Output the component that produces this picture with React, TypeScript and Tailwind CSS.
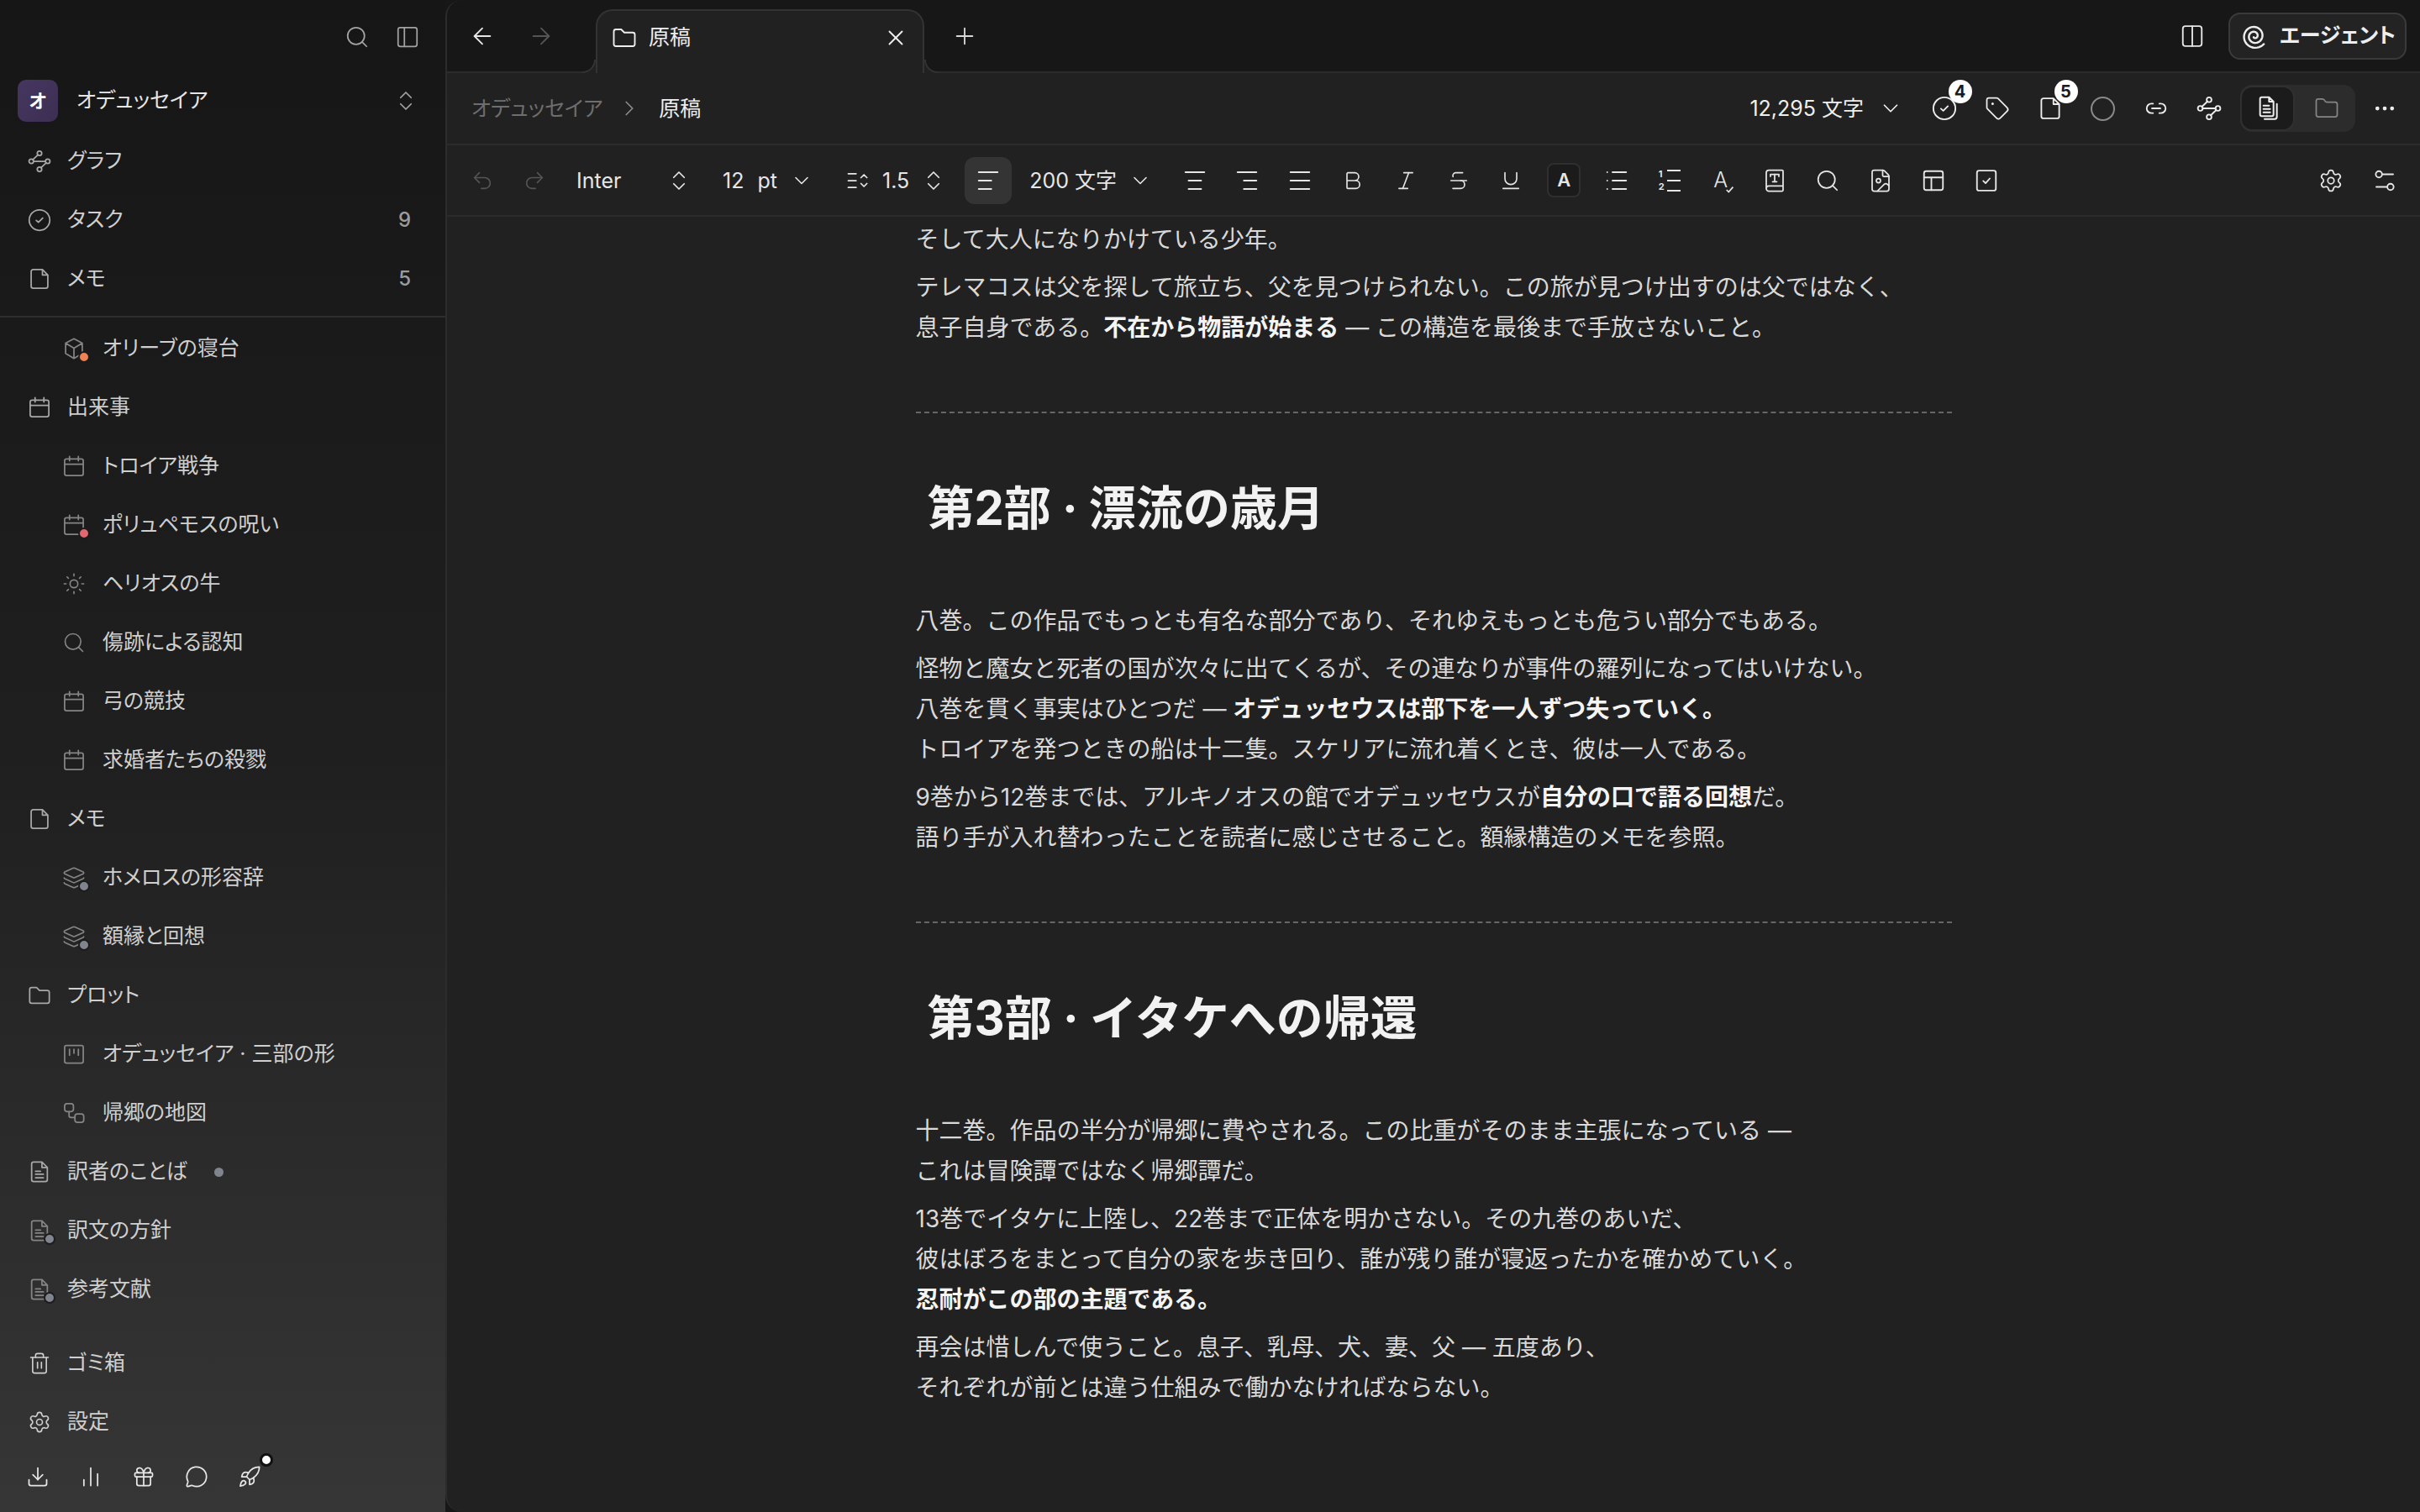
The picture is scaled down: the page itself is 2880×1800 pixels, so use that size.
import type { ReactNode } from 'react'
import {
  ArrowLeft, ArrowRight, Bold, BookType, ChevronDown, ChevronRight, ChevronsUpDown, Download, Ellipsis,
  FileImage, Folder, Gift, Italic, Layers, MessageCircle, PanelLeft, Plus, Redo2, Rocket, Search, Settings,
  Strikethrough, Sun, Tag, Trash2, Underline, Undo2, X,
} from 'lucide-react'

function Svg({ size = 28, children, className }: { size?: number; children: ReactNode; className?: string }) {
  return (
    <svg width={size} height={size} viewBox="0 0 24 24" fill="none" stroke="currentColor" strokeWidth="1.5" strokeLinecap="round" strokeLinejoin="round" className={className}>
      {children}
    </svg>
  )
}

const GraphIcon = ({ size = 28 }: { size?: number }) => (
  <Svg size={size}>
    <circle cx="12" cy="3.800" r="2.300" /><circle cx="3.600" cy="12" r="2.300" /><circle cx="20.400" cy="12" r="2.300" /><circle cx="12" cy="20.200" r="2.300" />
    <path d="M5.900 12h12.200M10.400 5.400 5.200 10.400M18.800 13.600l-5.200 5" />
  </Svg>
)
const CheckCircle = ({ size = 28 }: { size?: number }) => (
  <Svg size={size}><circle cx="12" cy="12" r="10.500" /><path d="m8.700 12.300 2.200 2 4.400-4.400" /></Svg>
)
const FileIcon = ({ size = 28 }: { size?: number }) => (
  <Svg size={size}><path d="M15 2.500H5.500a2 2 0 0 0-2 2v15a2 2 0 0 0 2 2h13a2 2 0 0 0 2-2V8zM15 2.500V8h5.500" /></Svg>
)
const BoxIcon = () => (
  <Svg><path d="M12 2 3.500 6.500v10.500L12 22l8.500-5V6.500zM3.500 6.500 12 11.500l8.500-5M12 11.500V22" /></Svg>
)
const CalendarIcon = () => (
  <Svg><rect x="2.500" y="4.500" width="19" height="17" rx="2" /><path d="M2.500 10h19M7.500 2v4.500M16.500 2v4.500" /></Svg>
)
const FolderIcon = ({ size = 28 }: { size?: number }) => (
  <Svg size={size}><path d="M2 6a2 2 0 0 1 2-2h5l3 3h8a2 2 0 0 1 2 2v9a2 2 0 0 1-2 2H4a2 2 0 0 1-2-2z" /></Svg>
)
const KanbanIcon = () => (
  <Svg><rect x="2.500" y="3" width="19" height="18" rx="2" /><path d="M7.500 7v6M12 7v4M16.500 7v6" /></Svg>
)
const FlowIcon = () => (
  <Svg><rect x="2.500" y="2.500" width="9" height="8" rx="2.500" /><rect x="13" y="13" width="9" height="8.500" rx="2.500" /><path d="M7 10.500v4a2 2 0 0 0 2 2h4" /></Svg>
)
const NoteIcon = () => (
  <Svg><path d="M14.500 2H6a2 2 0 0 0-2 2v16a2 2 0 0 0 2 2h12a2 2 0 0 0 2-2V7.500zM14.500 2v5.500H20M8 11.500h5M8 14.500h8M8 18h8" /></Svg>
)
const BarsIcon = () => (
  <Svg><path d="M5 21v-6M12 21V3M19 21V9" /></Svg>
)
const AlignIcon = ({ lines }: { lines: [number, number][] }) => (
  <Svg size={30} className="text-[#e6e6e6]">
    {lines.map(([a, b], i) => <path key={i} d={`M${a} ${4 + i * 8}H${b}`} />)}
  </Svg>
)

// archimedean spiral, winds outward counter-clockwise and stops at about 4 o'clock
const spiralPath = Array.from({ length: 90 }, (_, i) => {
  const u = i / 89
  const a = ((40 + (1 - u) * 2.25 * 360) * Math.PI) / 180
  const r = 1.2 + u * 9.8
  return `${i === 0 ? 'M' : 'L'}${(12 + r * Math.cos(a)).toFixed(2)} ${(12 + r * Math.sin(a)).toFixed(2)}`
}).join('')

const Spiral = () => (
  <svg width="32" height="32" viewBox="0 0 24 24" fill="none" stroke="#eeeeee" strokeWidth="1.800" strokeLinecap="round" strokeLinejoin="round">
    <path d={spiralPath} />
  </svg>
)

const dotColor = { orange: 'bg-[#ef8354]', red: 'bg-[#e0686e]', gray: 'bg-[#80848e]' }

type Row = { label: string; icon: ReactNode; indent?: boolean; dot?: keyof typeof dotColor; count?: string; trail?: boolean }

const topRows: Row[] = [
  { label: 'グラフ', icon: <GraphIcon /> },
  { label: 'タスク', icon: <CheckCircle />, count: '9' },
  { label: 'メモ', icon: <FileIcon />, count: '5' },
]

const treeRows: Row[] = [
  { label: 'オリーブの寝台', icon: <BoxIcon />, indent: true, dot: 'orange' },
  { label: '出来事', icon: <CalendarIcon /> },
  { label: 'トロイア戦争', icon: <CalendarIcon />, indent: true },
  { label: 'ポリュペモスの呪い', icon: <CalendarIcon />, indent: true, dot: 'red' },
  { label: 'ヘリオスの牛', icon: <Sun size={28} strokeWidth={1.4} />, indent: true },
  { label: '傷跡による認知', icon: <Search size={28} strokeWidth={1.4} />, indent: true },
  { label: '弓の競技', icon: <CalendarIcon />, indent: true },
  { label: '求婚者たちの殺戮', icon: <CalendarIcon />, indent: true },
  { label: 'メモ', icon: <FileIcon /> },
  { label: 'ホメロスの形容辞', icon: <Layers size={28} strokeWidth={1.4} />, indent: true, dot: 'gray' },
  { label: '額縁と回想', icon: <Layers size={28} strokeWidth={1.4} />, indent: true, dot: 'gray' },
  { label: 'プロット', icon: <FolderIcon /> },
  { label: 'オデュッセイア · 三部の形', icon: <KanbanIcon />, indent: true },
  { label: '帰郷の地図', icon: <FlowIcon />, indent: true },
  { label: '訳者のことば', icon: <NoteIcon />, trail: true },
  { label: '訳文の方針', icon: <NoteIcon />, dot: 'gray' },
  { label: '参考文献', icon: <NoteIcon />, dot: 'gray' },
]

function SideRow({ row }: { row: Row }) {
  return (
    <div className={`flex h-[70px] items-center text-[25px] text-[#cfcfcf] ${row.indent ? 'pl-[74px]' : 'pl-[33px]'}`}>
      <span className={`relative flex h-[28px] w-[28px] items-center justify-center ${row.indent ? 'mr-[20px]' : 'mr-[19px]'} ${row.indent || row.dot ? 'text-[#858585]' : 'text-[#a8a8a8]'}`}>
        {row.icon}
        {row.dot && (
          <span className={`absolute -bottom-[3px] -right-[5px] h-[14px] w-[14px] rounded-full border-[2px] border-[#1c1c1c] ${dotColor[row.dot]}`} />
        )}
      </span>
      <span>{row.label}</span>
      {row.trail && <span className="ml-[32px] h-[11px] w-[11px] rounded-full bg-[#80848e]" />}
      {row.count && <span className="ml-auto mr-[41px] text-[24px] font-medium text-[#9c9c9c]">{row.count}</span>}
    </div>
  )
}

function Sidebar() {
  return (
    <aside className="flex h-full w-[530px] shrink-0 flex-col bg-linear-to-b from-[#161616] via-[#1f1f1f] to-[#363636]">
      <div className="flex h-[85px] items-center justify-end gap-[30px] pb-[2px] pr-[30px] pt-[4px] text-[#a3a3a3]">
        <Search size={30} strokeWidth={1.4} />
        <PanelLeft size={30} strokeWidth={1.4} />
      </div>
      <div className="flex h-[70px] items-center pl-[21px] pr-[32px]">
        <span className="flex h-[50px] w-[48px] items-center justify-center rounded-[10px] bg-linear-to-br from-[#463660] to-[#3c2f52] text-[22px] font-bold text-white">オ</span>
        <span className="ml-[22px] text-[25px] text-[#e6e6e6]">オデュッセイア</span>
        <ChevronsUpDown size={30} strokeWidth={1.4} className="ml-auto text-[#a3a3a3]" />
      </div>
      <div className="mt-[2px] border-b-[2px] border-[#2e2e2e] pb-[9px]">
        {topRows.map((r) => <SideRow key={r.label} row={r} />)}
      </div>
      <div className="mt-[2px]">
        {treeRows.map((r, i) => <SideRow key={i} row={r} />)}
      </div>
      <div className="mt-[18px] text-[#dcdcdc]">
        <SideRow row={{ label: 'ゴミ箱', icon: <span className="text-[#cfcfcf]"><Trash2 size={28} strokeWidth={1.4} /></span> }} />
        <SideRow row={{ label: '設定', icon: <span className="text-[#cfcfcf]"><Settings size={28} strokeWidth={1.4} /></span> }} />
      </div>
      <div className="flex h-[60px] items-center gap-[35px] pl-[31px] text-[#e6e6e6]">
        <Download size={28} strokeWidth={1.5} />
        <BarsIcon />
        <Gift size={28} strokeWidth={1.5} />
        <MessageCircle size={28} strokeWidth={1.5} />
        <span className="relative">
          <Rocket size={28} strokeWidth={1.5} />
          <span className="absolute -right-[14px] -top-[14px] h-[16px] w-[16px] rounded-full border-[3px] border-[#111111] bg-white" />
        </span>
      </div>
    </aside>
  )
}

function Cell({ w = 'w-[62.800px]', children }: { w?: string; children: ReactNode }) {
  return <span className={`flex shrink-0 items-center justify-center ${w}`}>{children}</span>
}

function TabBar() {
  return (
    <div className="flex h-[87px] shrink-0 items-end border-b-[2px] border-[#2c2c2c] bg-[#171717] pl-[7px] pr-[16px]">
      <div className="flex h-[85px] items-center text-[#e6e6e6]">
        <Cell w="w-[70px]"><ArrowLeft size={32} strokeWidth={1.4} /></Cell>
        <Cell w="w-[70px]"><ArrowRight size={32} strokeWidth={1.4} className="text-[#555555]" /></Cell>
      </div>
      <div className="relative z-10 -mb-[2px] ml-[30px] flex h-[76px] w-[391px] items-center rounded-t-[20px] border-x-[2px] border-t-[2px] border-[#333333] bg-[#212121] pb-[11px] pl-[17px] pr-[17px] text-[#eeeeee]">
        {/* flared bottom corners of the tab */}
        <span className="absolute -left-[18px] bottom-0 h-[16px] w-[16px] bg-[#212121]">
          <span className="block h-[16px] w-[16px] rounded-br-[16px] border-b-[2px] border-r-[2px] border-[#333333] bg-[#171717]" />
        </span>
        <span className="absolute -right-[18px] bottom-0 h-[16px] w-[16px] bg-[#212121]">
          <span className="block h-[16px] w-[16px] rounded-bl-[16px] border-b-[2px] border-l-[2px] border-[#333333] bg-[#171717]" />
        </span>
        <FolderIcon size={30} />
        <span className="ml-[14px] text-[25px]">原稿</span>
        <X size={30} strokeWidth={1.5} className="ml-auto" />
      </div>
      <div className="flex h-[85px] items-center pl-[32px] text-[#d8d8d8]">
        <Plus size={32} strokeWidth={1.4} />
      </div>
      <div className="ml-auto flex h-[85px] items-center text-[#e6e6e6]">
        <Svg size={30}><rect x="3" y="2.500" width="18" height="19" rx="2.500" /><path d="M12 2.500v19" /></Svg>
        <div className="ml-[28px] flex h-[56px] w-[212px] items-center rounded-[14px] border-[2px] border-[#3a3a3a] bg-[#232323] pl-[13px] text-[25px] font-semibold text-[#eeeeee]">
          <Spiral />
          <span className="ml-[14px]">エージェント</span>
        </div>
      </div>
    </div>
  )
}

function Badge({ n }: { n: string }) {
  return <span className="absolute -right-[18px] -top-[19px] flex h-[28px] w-[28px] items-center justify-center rounded-full bg-white text-[20px] font-bold text-[#1b1b1b]">{n}</span>
}

function Breadcrumbs() {
  return (
    <div className="flex h-[86px] shrink-0 items-center border-b-[2px] border-[#2b2b2b] pl-[29px] pr-[10px] text-[25px] text-[#eeeeee]">
      <span className="pt-[2px] text-[#6e6e6e]">オデュッセイア</span>
      <ChevronRight size={30} strokeWidth={1.4} className="ml-[17px] text-[#8a8a8a]" />
      <span className="ml-[20px] pt-[2px]">原稿</span>
      <span className="ml-auto pt-[2px]">12,295 文字</span>
      <ChevronDown size={30} strokeWidth={1.4} className="ml-[17px]" />
      <span className="ml-[17px] flex items-center">
        <Cell w="w-[63px]"><span className="relative"><CheckCircle size={30} /><Badge n="4" /></span></Cell>
        <Cell w="w-[63px]"><Tag size={30} strokeWidth={1.4} /></Cell>
        <Cell w="w-[63px]"><span className="relative"><FileIcon size={30} /><Badge n="5" /></span></Cell>
        <Cell w="w-[63px]"><span className="block h-[29px] w-[29px] rounded-full border-[2px] border-[#8a8a8a]" /></Cell>
        <Cell w="w-[63px]">
          <Svg size={30}><path d="M9 7.500H7.500a4.500 4.500 0 0 0 0 9H9M15 7.500h1.500a4.500 4.500 0 0 1 0 9H15M8 12h8" /></Svg>
        </Cell>
        <Cell w="w-[63px]"><GraphIcon size={30} /></Cell>
      </span>
      <span className="ml-[6px] flex h-[56px] w-[137px] items-center rounded-[14px] bg-[#2c2c2c]">
        <span className="flex h-[54px] w-[65px] items-center justify-center rounded-[14px] border-[2px] border-[#303030] bg-[#1b1b1b]">
          <Svg size={32}>
            <path d="M13 2H6.500a1.500 1.500 0 0 0-1.500 1.500v14A1.500 1.500 0 0 0 6.500 19h9a1.500 1.500 0 0 0 1.500-1.500V6zM13 2v4h4M8 9.500h5M8 12.500h6M8 15.500h6M20 8v11.500a2 2 0 0 1-2 2H9" />
          </Svg>
        </span>
        <Folder size={30} strokeWidth={1.4} className="ml-[23px] text-[#858585]" />
      </span>
      <Cell w="ml-[3px] w-[64px]"><Ellipsis size={30} strokeWidth={1.8} /></Cell>
    </div>
  )
}

function Chevrons() {
  return <ChevronsUpDown size={30} strokeWidth={1.4} className="text-[#e6e6e6]" />
}

function Toolbar() {
  return (
    <div className="flex h-[85px] shrink-0 items-center border-b-[2px] border-[#2b2b2b] pl-[11px] pr-[10px] text-[25px] text-[#e6e6e6]">
      <Cell w="w-[62px]"><Undo2 size={28} strokeWidth={1.4} className="text-[#555555]" /></Cell>
      <Cell w="w-[62px]"><Redo2 size={28} strokeWidth={1.4} className="text-[#555555]" /></Cell>
      <span className="flex w-[156px] items-center justify-between pl-[19px]"><span className="pt-[2px]">Inter</span><Chevrons /></span>
      <span className="flex w-[145px] items-center pl-[37px]">
        <span className="pt-[2px]">12</span><span className="ml-[16px] pt-[2px]">pt</span>
        <ChevronDown size={28} strokeWidth={1.4} className="ml-auto" />
      </span>
      <span className="ml-[38px] flex items-center">
        <Svg size={28}><path d="M3 5h8M3 12h8M3 19h8M16 9l3-3 3 3M16 15l3 3 3-3" /></Svg>
        <span className="ml-[16px] pt-[2px]">1.5</span>
        <span className="ml-[14px]"><Chevrons /></span>
      </span>
      <span className="ml-[22px] flex h-[56px] w-[56px] items-center justify-center rounded-[12px] bg-[#343434]">
        <AlignIcon lines={[[3, 21], [3, 15], [3, 15]]} />
      </span>
      <span className="ml-[21px] flex w-[146px] items-center">
        <span className="pt-[2px]">200 文字</span>
        <ChevronDown size={28} strokeWidth={1.4} className="ml-auto" />
      </span>
      <span className="ml-[19px] flex items-center">
        <Cell><AlignIcon lines={[[3, 21], [6, 18], [6, 18]]} /></Cell>
        <Cell><AlignIcon lines={[[3, 21], [9, 21], [9, 21]]} /></Cell>
        <Cell><AlignIcon lines={[[3, 21], [3, 21], [3, 21]]} /></Cell>
        <Cell><Bold size={28} strokeWidth={1.4} /></Cell>
        <Cell><Italic size={28} strokeWidth={1.4} /></Cell>
        <Cell><Strikethrough size={28} strokeWidth={1.4} /></Cell>
        <Cell><Underline size={28} strokeWidth={1.4} /></Cell>
        <Cell><span className="flex h-[41px] w-[40px] items-center justify-center rounded-[8px] border-[2px] border-[#2f2f2f] bg-[#1b1b1b] text-[22px] font-semibold">A</span></Cell>
        <Cell>
          <Svg size={30}><path d="M8 4h13M8 12h13M8 20h13M3 4h.01M3 12h.01M3 20h.01" /></Svg>
        </Cell>
        <Cell>
          <span className="relative flex h-[28px] w-[28px] flex-col justify-between py-[1px] pl-[11px]">
            <span className="h-[2px] w-[16px] bg-[#e6e6e6]" /><span className="h-[2px] w-[16px] bg-[#e6e6e6]" /><span className="h-[2px] w-[16px] bg-[#e6e6e6]" />
            <span className="absolute left-[1px] top-0 text-[11px] font-bold leading-[13px]">1</span>
            <span className="absolute bottom-0 left-[1px] text-[11px] font-bold leading-[13px]">2</span>
          </span>
        </Cell>
        <Cell>
          <span className="relative pr-[4px] text-[25px] font-light leading-none">
            A
            <svg width="12" height="12" viewBox="0 0 14 14" fill="none" stroke="currentColor" strokeWidth="2" className="absolute -bottom-[5px] -right-[5px]"><path d="m2 7 3 3 6-7" /></svg>
          </span>
        </Cell>
        <Cell><BookType size={30} strokeWidth={1.4} /></Cell>
        <Cell><Search size={30} strokeWidth={1.4} /></Cell>
        <Cell><FileImage size={30} strokeWidth={1.4} /></Cell>
        <Cell>
          <Svg size={30}><rect x="3" y="3" width="18" height="18" rx="2" /><path d="M3 9h18M10 9v12" /></Svg>
        </Cell>
        <Cell>
          <Svg size={30}><rect x="3" y="2.500" width="18" height="19" rx="2" /><path d="m9 12.300 2.200 2.200 4-4.500" /></Svg>
        </Cell>
      </span>
      <span className="ml-auto flex items-center">
        <Cell w="w-[64px]"><Settings size={30} strokeWidth={1.4} /></Cell>
        <Cell w="w-[64px]">
          <Svg size={30}><circle cx="6.500" cy="6" r="3" /><path d="M10 6h10M4 18h10" /><circle cx="17.500" cy="18" r="3" /></Svg>
        </Cell>
      </span>
    </div>
  )
}

function P({ children }: { children: ReactNode }) {
  return <p className="mb-[9px]">{children}</p>
}
function B({ children }: { children: ReactNode }) {
  return <strong className="font-semibold text-[#f4f4f4]">{children}</strong>
}
function Hr() {
  return <hr className="mt-[76px] border-0 border-t-[2px] border-dashed border-[#666666]" />
}
function H({ children }: { children: ReactNode }) {
  return <h2 className="mb-[66px] mt-[69px] pl-[14px] text-[56px] font-bold leading-[88px] text-[#f2f2f2]">{children}</h2>
}

function Doc() {
  return (
    <div className="min-h-0 flex-1 overflow-hidden pt-[3px]">
      <div className="mx-auto w-[1233px] text-[28px] leading-[48px] text-[#d9d9d9] [font-feature-settings:'pkna']">
        <P>そして大人になりかけている少年。</P>
        <P>
          テレマコスは父を探して旅立ち、父を見つけられない。この旅が見つけ出すのは父ではなく、<br />
          息子自身である。<B>不在から物語が始まる</B> — この構造を最後まで手放さないこと。
        </P>
        <Hr />
        <H>第2部 · 漂流の歳月</H>
        <P>八巻。この作品でもっとも有名な部分であり、それゆえもっとも危うい部分でもある。</P>
        <P>
          怪物と魔女と死者の国が次々に出てくるが、その連なりが事件の羅列になってはいけない。<br />
          八巻を貫く事実はひとつだ — <B>オデュッセウスは部下を一人ずつ失っていく。</B><br />
          トロイアを発つときの船は十二隻。スケリアに流れ着くとき、彼は一人である。
        </P>
        <P>
          9巻から12巻までは、アルキノオスの館でオデュッセウスが<B>自分の口で語る回想</B>だ。<br />
          語り手が入れ替わったことを読者に感じさせること。額縁構造のメモを参照。
        </P>
        <Hr />
        <H>第3部 · イタケへの帰還</H>
        <P>
          十二巻。作品の半分が帰郷に費やされる。この比重がそのまま主張になっている —<br />
          これは冒険譚ではなく帰郷譚だ。
        </P>
        <P>
          13巻でイタケに上陸し、22巻まで正体を明かさない。その九巻のあいだ、<br />
          彼はぼろをまとって自分の家を歩き回り、誰が残り誰が寝返ったかを確かめていく。<br />
          <B>忍耐がこの部の主題である。</B>
        </P>
        <P>
          再会は惜しんで使うこと。息子、乳母、犬、妻、父 — 五度あり、<br />
          それぞれが前とは違う仕組みで働かなければならない。
        </P>
      </div>
    </div>
  )
}

export default function App() {
  return (
    <div className="flex h-screen w-full overflow-hidden bg-[#171717] font-['Inter','Noto_Sans_CJK_JP',sans-serif] [font-feature-settings:'palt']">
      <Sidebar />
      <main className="flex h-full min-w-0 flex-1 flex-col overflow-hidden rounded-l-[20px] border-l-[2px] border-[#2c2c2c] bg-[#212121]">
        <TabBar />
        <Breadcrumbs />
        <Toolbar />
        <Doc />
      </main>
    </div>
  )
}
